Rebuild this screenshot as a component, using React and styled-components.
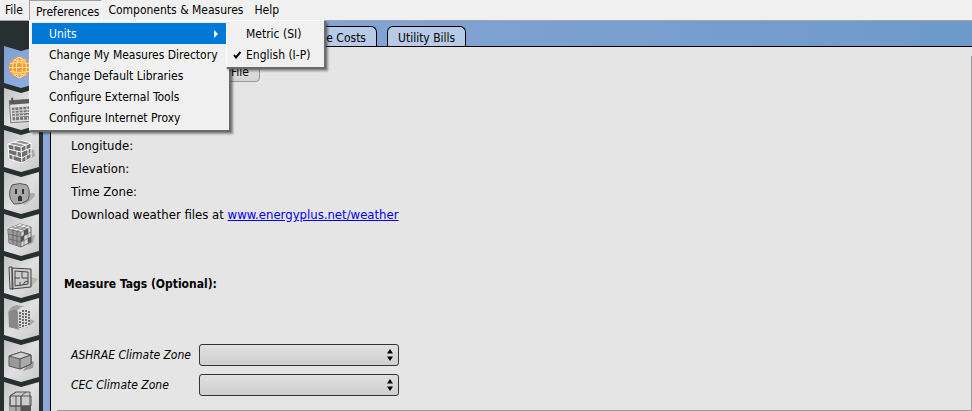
import React from 'react';
import styled, { createGlobalStyle, css } from 'styled-components';

const Global = createGlobalStyle`
  * { box-sizing: border-box; }
  html, body, #root { height: 100%; margin: 0; }
  body { overflow: hidden; background: #e5e5e5; }
  button, select { font: inherit; color: inherit; }
`;

const menuFont = css`font: 12px/20px "DejaVu Sans Condensed", "Segoe UI", sans-serif;`;
const bodyFont = css`font: 12px/16px "DejaVu Sans Condensed", Tahoma, "DejaVu Sans", sans-serif;`;

const Window = styled.div`
  height: 100%;
  display: flex;
  flex-direction: column;
  color: #000;
`;

const MenuBar = styled.nav`
  position: relative;
  z-index: 2;
  display: flex;
  height: 21px;
  flex: none;
  gap: 1px;
  background: #f0f0f0;
  border-bottom: 1px solid #a0a4a8;
  ${menuFont}
`;

const MenuHolder = styled.div`position: relative;`;

const MenuTitle = styled.button`
  height: 20px;
  padding: 0 5px;
  border: 0;
  background: transparent;
  white-space: nowrap;
  line-height: 20px;
  ${p => p.$open && css`
    padding: 1px 2px 0 6px;
    border: 1px solid #a0a0a0;
    border-right-color: #fff;
    border-bottom: 0;
  `}
`;

const Menu = styled.div`
  position: absolute;
  top: ${p => (p.$sub ? '-3px' : '20px')};
  left: ${p => (p.$sub ? '194px' : '0')};
  z-index: ${p => (p.$sub ? 2 : 1)};
  padding: 2px 3px 2px 2px;
  background: #f0f0f0;
  border: 1px solid #fff;
  border-right-color: #6b6b6b;
  border-bottom-color: #6b6b6b;
  box-shadow: 1px 1px 1px #696969, 3px 3px 2px rgba(0, 0, 0, 0.4);
`;

const MenuItem = styled.button`
  display: flex;
  align-items: center;
  width: ${p => (p.$sub ? '92px' : '194px')};
  height: 21px;
  padding: 0;
  border: 0;
  text-align: left;
  white-space: nowrap;
  background: ${p => (p.$active ? '#0078d7' : 'transparent')};
  color: ${p => (p.$active ? '#fff' : '#000')};
`;

const Mark = styled.span`
  display: flex;
  width: 17px;
  flex: none;
  justify-content: center;
`;
const ItemText = styled.span`flex: 1;`;
const Arrow = styled.svg`width: 4px; height: 8px; margin-right: 8px;`;

const Body = styled.div`
  flex: 1;
  display: flex;
  min-height: 0;
`;

const Rail = styled.aside`
  display: flex;
  flex-direction: column;
  width: 43px;
  flex: none;
  padding: 25px 4px 0;
  overflow: hidden;
  background: #272f31;
`;

const RailButton = styled.button`
  display: block;
  flex: none;
  width: 35px;
  height: 42px;
  padding: 0;
  border: 0;
  background: none;
  svg { display: block; }
`;

const Main = styled.main`
  flex: 1;
  display: flex;
  flex-direction: column;
  min-width: 0;
  background: linear-gradient(90deg, #8da8d8, #6d9ac9);
  padding-left: 7px;
  ${bodyFont}
`;

const Tabs = styled.div`
  display: flex;
  gap: 10px;
  height: 25px;
  flex: none;
  padding: 5px 0 0 10px;
`;

const Tab = styled.button`
  height: 20px;
  padding: 2px 10px 0;
  border: 1px solid #000;
  border-bottom: 0;
  border-radius: 6px 6px 0 0;
  background: ${p => (p.$current ? '#e5e5e5' : '#b8cbe6')};
  white-space: nowrap;
  text-align: right;
  width: ${p => p.$width}px;
`;

const Page = styled.section`
  flex: 1;
  display: flex;
  flex-direction: column;
  border: 1px solid #000;
  border-right: 0;
  border-bottom: 0;
  background: #e5e5e5;
  min-height: 0;
  padding-top: 9px;
`;

const Site = styled.div`
  flex: 1;
  padding: 5px 0 0 14px;
  margin-left: 6px;
  border-right: 1px solid #999;
  border-bottom: 1px solid #999;
`;

const FileButton = styled.button`
  display: block;
  width: 189px;
  height: 21px;
  padding: 0 10px;
  border: 1px solid #999;
  border-radius: 4px;
  background: linear-gradient(#e2e2e2, #d4d4d4);
  text-align: right;
`;

const Facts = styled.div`
  display: flex;
  flex-direction: column;
  gap: 7px;
  margin-top: 56px;
  font-size: 13px;
`;
const Fact = styled.div``;
const Link = styled.a`color: #0000ee;`;

const Heading = styled.h2`
  margin: 53px 0 52px -7px;
  ${bodyFont}
  font-weight: bold;
`;

const Field = styled.div`
  display: grid;
  grid-template-columns: 120px 200px;
  column-gap: 8px;
  align-items: center;
  height: 22px;
  margin-bottom: 8px;
`;
const Label = styled.label`font-style: italic; white-space: nowrap;`;
const SelectWrap = styled.div`display: grid; align-items: center; > * { grid-area: 1 / 1; }`;
const Select = styled.select`
  appearance: none;
  width: 100%;
  height: 22px;
  border: 1px solid #333;
  border-radius: 3px;
  background: linear-gradient(#e0e0e0, #cfcfcf);
`;
const Spin = styled.svg`
  justify-self: end;
  margin-right: 6px;
  pointer-events: none;
`;

const Combo = ({ id, label }) => (
  <Field>
    <Label htmlFor={id}>{label}</Label>
    <SelectWrap>
      <Select id={id} />
      <Spin width="6" height="12" viewBox="0 0 6 12"><path d="M3 0 6 4.500H0zM0 7.500H6L3 12z" /></Spin>
    </SelectWrap>
  </Field>
);

const drawings = {
  Site: (
    <g>
      <circle cx="15.500" cy="21.500" r="10.500" fill="#f09c35" />
      <g fill="none" stroke="#ffe0a0" strokeWidth="1">
        <ellipse cx="15.500" cy="21.500" rx="3" ry="10" /><ellipse cx="15.500" cy="21.500" rx="7" ry="10" />
        <path d="M5 21.500h21M6 17.500q9-2 19 0M6 25.500q9 2 19 0M9 14q6 2 13 0M9 29q6-2 13 0" />
      </g>
    </g>
  ),
  Schedules: (
    <g transform="rotate(-4 17 22)">
      <path d="M6 12h24v22H6z" fill="#e2e2e2" stroke="#777" />
      <path d="M6 12h24v4H6z" fill="#5c5c5c" />
      <path d="M9 9v5M27 9v5" stroke="#555" strokeWidth="2" />
      <path d="M8 19h20v13H8z" fill="#777" />
      <path d="M8 22h20M8 25h20M8 28h20M11 19v13M15 19v13M19 19v13M23 19v13" stroke="#ddd" />
    </g>
  ),
  Constructions: (
    <g>
      <path d="m22 32 9-6-1-6-4-1z" fill="#aaa" />
      <path d="m4 14 12-4 11 3v15l-9 5-13-4z" fill="#707070" />
      <path d="m4 14 12-4 11 3-10 4z" fill="#969696" />
      <g fill="none" stroke="#fff" strokeWidth="1">
        <path d="m4 14 13 3 10-4-11-3zM4 14l1 15 13 4 9-5V13" />
        <path d="m4 19 13 3 10-4M5 24l13 4 9-5M17 17l1 16M10 15v5M13 21v5M9 25v5M22 15v5M24 19v5M22 26v4M10 12l12 3" />
      </g>
    </g>
  ),
  Loads: (
    <g>
      <path d="M19 31c5-2 4-10 9-10s3 4-2 8l-6 4z" fill="#aaa" />
      <path d="M8 13q8-3 15 0 4 6 1 15-6 5-14 4-8-8-2-19z" fill="#a9a9a9" stroke="#555" />
      <path d="M12 17v5M19 17v5" stroke="#333" strokeWidth="2" />
      <path d="M14 29v-4q2-3 4 0v4z" fill="#333" />
    </g>
  ),
  Types: (
    <g>
      <path d="m24 31 5-2 2-8-5 1z" fill="#aaa" />
      <path d="m4 15 12-5 11 3v15l-10 5-12-4z" fill="#ddd" stroke="#666" />
      <path d="m4 15 12-5 11 3-10 5z" fill="#f2f2f2" />
      <path d="M4 15 17 18V33L5 29z" fill="#999" />
      <path d="m17 23 3-2v5l-3 2zM20 16l4-1v5l-4 2zM24 24l3-1v5l-3 1z" fill="#555" />
      <path d="m8 13 12 3M12 12l12 3M8 16l11-5M13 17l11-5M4 15l13 3 10-5M4 20l13 3 10-5M5 25l12 3 10-5M9 16v14M13 17v15M17 18v15M20 16v15M24 15v14" fill="none" stroke="#555" strokeWidth=".600" />
    </g>
  ),
  Geometry: (
    <g fill="none" stroke="#444">
      <path d="M27 21l7 2-7 8z" fill="#bbb9a4" stroke="none" />
      <path d="m8 12 19 1v18L8 33z" fill="#ccc" />
      <path d="M5 11h3l1 22H6zM11 15l13 1v12l-13 2zM11 22h5M18 16v6h6M16 30v-4M19 29q1-4 5-4" />
    </g>
  ),
  Facility: (
    <g>
      <path d="m22 31 9-8-5-2z" fill="#aaa" />
      <path d="M4 14q2-6 9-7l13 3v18l-11 4-10-3z" fill="#a2a2a2" />
      <path d="M13 13q6-7 13-3v18l-11 4z" fill="#ddd" />
      <path d="M5 14q7-5 9 0v17l-9-2z" fill="#888" />
      <path d="M16 14v16M19 12v17M22 12v16M25 13v14" stroke="#444" strokeWidth="1.500" strokeDasharray="2 1" />
    </g>
  ),
  Spaces: (
    <g>
      <path d="m19 31 10-3 1-6-4-2z" fill="#999" />
      <path d="m5 16 12-4 10 3v9l-11 5-11-3z" fill="#999" stroke="#555" />
      <path d="m5 16 12-4 10 3-11 4z" fill="#d0d0d0" stroke="#555" />
      <path d="M16 19v10l11-5v-9z" fill="#aaa" stroke="#555" />
    </g>
  ),
  Zones: (
    <g>
      <path d="m6 14 6-4h14v22l-9 3-11-3z" fill="#ccc" stroke="#555" />
      <path d="M6 24h11v12H6z" fill="#aaa" /><path d="M17 24h10v12H17z" fill="#555" />
      <path d="M6 14h11v10H6zM17 14h10v10H17zM6 14l6-4M17 14l5-4M17 24v12M6 24h21M12 14v20" fill="none" stroke="#555" />
    </g>
  ),
};

const RailTile = ({ name }) => (
  <RailButton aria-label={name}>
    <svg width="35" height="42" viewBox="0 0 35 42">
      <defs>
        <linearGradient id={`tile-${name}`} x2="1" y2="1">
          <stop stopColor={name === 'Site' ? '#7f9ed0' : '#c4c4c4'} />
          <stop offset=".500" stopColor={name === 'Site' ? '#8ba8dc' : '#e0e0e0'} />
          <stop offset="1" stopColor={name === 'Site' ? '#91addd' : '#c8c8c8'} />
        </linearGradient>
      </defs>
      <path d="M0 0 17 5 35 0V37L17 42 0 37z" fill={`url(#tile-${name})`} />
      {drawings[name]}
    </svg>
  </RailButton>
);

export default function App() {
  return (
    <Window>
      <Global />
      <MenuBar>
        <MenuTitle>File</MenuTitle>
        <MenuHolder>
          <MenuTitle $open>Preferences</MenuTitle>
          <Menu>
            <MenuHolder>
              <MenuItem $active><Mark /><ItemText>Units</ItemText>
                <Arrow viewBox="0 0 4 8"><path d="M0 0 4 4 0 8z" fill="#fff" /></Arrow>
              </MenuItem>
              <Menu $sub>
                <MenuItem $sub><Mark /><ItemText>Metric (SI)</ItemText></MenuItem>
                <MenuItem $sub>
                  <Mark><svg width="8" height="8" viewBox="0 0 8 8"><path d="M1 4 3 6.500 7.500 1" fill="none" stroke="#000" strokeWidth="2" /></svg></Mark>
                  <ItemText>English (I-P)</ItemText>
                </MenuItem>
              </Menu>
            </MenuHolder>
            <MenuItem><Mark /><ItemText>Change My Measures Directory</ItemText></MenuItem>
            <MenuItem><Mark /><ItemText>Change Default Libraries</ItemText></MenuItem>
            <MenuItem><Mark /><ItemText>Configure External Tools</ItemText></MenuItem>
            <MenuItem><Mark /><ItemText>Configure Internet Proxy</ItemText></MenuItem>
          </Menu>
        </MenuHolder>
        <MenuTitle>Components &amp; Measures</MenuTitle>
        <MenuTitle>Help</MenuTitle>
      </MenuBar>
      <Body>
        <Rail>{Object.keys(drawings).map(name => <RailTile key={name} name={name} />)}</Rail>
        <Main>
          <Tabs>
            <Tab $current $width={187}>Weather File</Tab>
            <Tab $width={120}>Life Cycle Costs</Tab>
            <Tab $width={79}>Utility Bills</Tab>
          </Tabs>
          <Page>
            <Site>
              <FileButton>Change Weather File</FileButton>
              <Facts>
                <Fact>Longitude:</Fact>
                <Fact>Elevation:</Fact>
                <Fact>Time Zone:</Fact>
                <Fact>Download weather files at <Link href="#weather">www.energyplus.net/weather</Link></Fact>
              </Facts>
              <Heading>Measure Tags (Optional):</Heading>
              <Combo id="ashrae" label="ASHRAE Climate Zone" />
              <Combo id="cec" label="CEC Climate Zone" />
            </Site>
          </Page>
        </Main>
      </Body>
    </Window>
  );
}
